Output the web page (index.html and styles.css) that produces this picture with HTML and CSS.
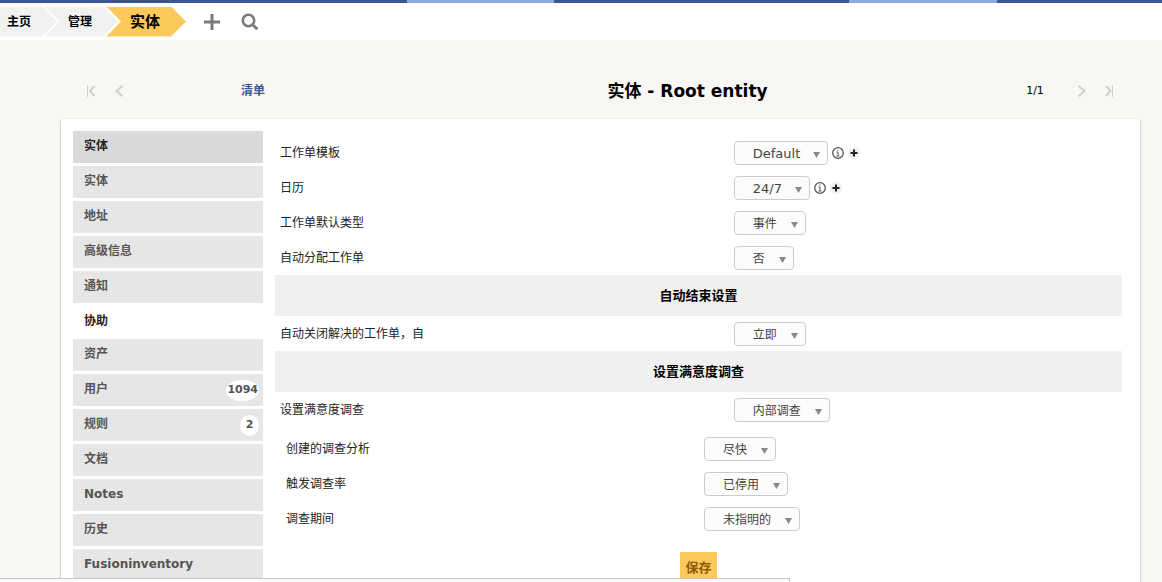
FILE: index.html
```html
<!DOCTYPE html>
<html lang="zh-CN">
<head>
    <meta charset="utf-8" />
    <title>实体 - Root entity</title>
    <link rel="stylesheet" href="styles.css">
</head>
<body>
<div class="page">
    <!-- Main menu, folded to a thin strip -->
    <div class="menu-strip">
        <span class="rest"></span>
        <span class="menu"></span>
        <span class="menu on"></span>
        <span class="menu"></span>
        <span class="menu"></span>
        <span class="menu on"></span>
        <span class="menu"></span>
    </div>

    <header class="top-bar">
        <nav class="breadcrumb">
            <a href="#" class="first">主页</a>
            <a href="#">管理</a>
            <a href="#" class="current">实体</a>
        </nav>
        <button type="button" class="tool" aria-label="添加">
            <svg width="18" height="18" viewBox="0 0 18 18"><path d="M9 1v16M1 9h16" stroke="#7b7b7b" stroke-width="3" fill="none"/></svg>
        </button>
        <button type="button" class="tool" aria-label="搜索">
            <svg width="18" height="18" viewBox="0 0 18 18"><circle cx="7.5" cy="7.5" r="5.7" stroke="#7b7b7b" stroke-width="2.6" fill="none"/><path d="M11.5 11.5l4.8 4.8" stroke="#7b7b7b" stroke-width="3"/></svg>
        </button>
    </header>

    <main>
        <!-- Record navigation -->
        <div class="pager">
            <a href="#" aria-label="第一条"><svg width="12" height="12" viewBox="0 0 12 12"><path d="M2.5 0v12"/><path class="bold" d="M9.5 .8L5 6l4.5 5.2"/></svg></a>
            <a href="#" aria-label="上一条"><svg width="12" height="12" viewBox="0 0 12 12"><path class="bold" d="M9.5 .8L3.5 6l6 5.2"/></svg></a>
            <a href="#" class="list-link">清单</a>
            <h1>实体 - Root entity</h1>
            <span class="count">1/1</span>
            <a href="#" aria-label="下一条"><svg width="12" height="12" viewBox="0 0 12 12"><path class="bold" d="M2.5 .8l6 5.2-6 5.2"/></svg></a>
            <a href="#" aria-label="最后一条"><svg width="12" height="12" viewBox="0 0 12 12"><path d="M8.5 0v12"/><path class="bold" d="M2 .8L6.5 6 2 11.2"/></svg></a>
        </div>

        <div class="card">
            <nav class="tabs">
                <a href="#" class="head">实体</a>
                <a href="#">实体</a>
                <a href="#">地址</a>
                <a href="#">高级信息</a>
                <a href="#">通知</a>
                <a href="#" class="active">协助</a>
                <a href="#">资产</a>
                <a href="#">用户<span class="badge">1094</span></a>
                <a href="#">规则<span class="badge">2</span></a>
                <a href="#">文档</a>
                <a href="#">Notes</a>
                <a href="#">历史</a>
                <a href="#">Fusioninventory</a>
            </nav>

            <form class="settings">
                <div class="row">
                    <label for="template">工作单模板</label>
                    <div class="field">
                        <select id="template" class="latin"><option>Default</option></select>
                        <button type="button" class="mini info" aria-label="说明"><svg width="12" height="12" viewBox="0 0 12 12"><circle cx="6" cy="6" r="5.3"/><path d="M4.5 5H6v4M4.5 9h3M6 2.5v1.3"/></svg></button>
                        <button type="button" class="mini plus" aria-label="添加模板"><svg width="12" height="12" viewBox="0 0 12 12"><path d="M6 2.5v7M2.5 6h7"/></svg></button>
                    </div>
                </div>
                <div class="row">
                    <label for="calendar">日历</label>
                    <div class="field">
                        <select id="calendar" class="latin"><option>24/7</option></select>
                        <button type="button" class="mini info" aria-label="说明"><svg width="12" height="12" viewBox="0 0 12 12"><circle cx="6" cy="6" r="5.3"/><path d="M4.5 5H6v4M4.5 9h3M6 2.5v1.3"/></svg></button>
                        <button type="button" class="mini plus" aria-label="添加日历"><svg width="12" height="12" viewBox="0 0 12 12"><path d="M6 2.5v7M2.5 6h7"/></svg></button>
                    </div>
                </div>
                <div class="row">
                    <label for="type">工作单默认类型</label>
                    <div class="field"><select id="type"><option>事件</option></select></div>
                </div>
                <div class="row">
                    <label for="assign">自动分配工作单</label>
                    <div class="field"><select id="assign"><option>否</option></select></div>
                </div>

                <h2>自动结束设置</h2>
                <div class="row">
                    <label for="close">自动关闭解决的工作单，自</label>
                    <div class="field"><select id="close"><option>立即</option></select></div>
                </div>

                <h2>设置满意度调查</h2>
                <div class="row">
                    <label for="survey">设置满意度调查</label>
                    <div class="field"><select id="survey"><option>内部调查</option></select></div>
                </div>
                <div class="sub">
                    <div class="row">
                        <label for="delay">创建的调查分析</label>
                        <div class="field"><select id="delay"><option>尽快</option></select></div>
                    </div>
                    <div class="row">
                        <label for="rate">触发调查率</label>
                        <div class="field"><select id="rate"><option>已停用</option></select></div>
                    </div>
                    <div class="row">
                        <label for="duration">调查期间</label>
                        <div class="field"><select id="duration"><option>未指明的</option></select></div>
                    </div>
                </div>
                <button type="submit" class="save">保存</button>
            </form>
        </div>
    </main>
</div>
<div class="link-status"></div>
</body>
</html>
```

FILE: styles.css
```css
* {
  box-sizing: border-box;
}
body {
  margin: 0;
  font-family: "DejaVu Sans", "Noto Sans CJK SC", sans-serif;
  font-size: 12px;
  line-height: 18px;
  color: #222;
  background-color: #f8f7f3;
}
a {
  color: inherit;
  text-decoration: none;
}
button {
  border: none;
  background: none;
  padding: 0;
  font-family: inherit;
  cursor: pointer;
}
svg {
  display: block;
}
.page {
  height: 100vh;
  overflow-y: auto;
  scrollbar-width: none;
}

/* ---- top ---- */
.menu-strip {
  display: flex;
  height: 3px;
  background-color: #3a5693;
}
.menu-strip .rest {
  width: 22.3%;
}
.menu-strip .menu {
  width: 12.7%;
}
.menu-strip .on {
  background-color: #8ba9dc;
}
.top-bar {
  display: flex;
  align-items: center;
  height: 37px;
  background-color: #fff;
}
.breadcrumb {
  display: flex;
  margin-right: 17px;
}
.breadcrumb a {
  height: 30px;
  line-height: 30px;
  margin-left: -12px;
  padding: 0 26px 0 23px;
  font-weight: bold;
  color: #000;
  background-color: #f1f1f1;
  clip-path: polygon(0 0, calc(100% - 15px) 0, 100% 50%, calc(100% - 15px) 100%, 0 100%, 15px 50%);
}
.breadcrumb a.first {
  margin-left: 0;
  padding-left: 7px;
  clip-path: polygon(0 0, calc(100% - 15px) 0, 100% 50%, calc(100% - 15px) 100%, 0 100%);
}
.breadcrumb a.current {
  padding-left: 24px;
  font-size: 15px;
  background-color: #fec95c;
}
.tool {
  margin-right: 20px;
}

/* ---- pager ---- */
main {
  padding: 37px 22px 0 61px;
}
.pager {
  display: grid;
  grid-template-columns: 28px 28px 240px 1fr 66px 28px 28px;
  align-items: center;
  justify-items: center;
  height: 28px;
  margin-bottom: 14px;
  padding: 0 16px;
}
.pager path {
  fill: none;
  stroke: #d0d0d0;
}
.pager path.bold {
  stroke-width: 2;
}
.pager .list-link {
  font-weight: bold;
  color: #3a5693;
}
.pager h1 {
  margin: 0;
  font-size: 17px;
  color: #000;
}
.pager .count {
  font-size: 11px;
  color: #000;
}

/* ---- card ---- */
.card {
  display: flex;
  gap: 12px;
  padding: 12px 18px 12px 12px;
  background-color: #fff;
  box-shadow: 0 1px 2px #999;
}
.tabs {
  display: flex;
  flex-direction: column;
  gap: 3px;
  width: 190px;
}
.tabs a {
  display: flex;
  justify-content: space-between;
  height: 32px;
  padding: 5px 4px 0 11px;
  line-height: 20px;
  font-weight: bold;
  color: #555;
  background-color: #e6e6e6;
}
.tabs .head {
  color: #222;
  background-color: #dadada;
}
.tabs .active {
  height: 30px;
  color: #222;
  background-color: #fff;
}
.badge {
  min-width: 19px;
  height: 21px;
  margin-top: 1px;
  padding: 0 1px;
  border-radius: 50%;
  font-size: 11px;
  text-align: center;
  background-color: #fff;
}

/* ---- form ---- */
.settings {
  flex: 1;
  display: flex;
  flex-direction: column;
  padding-top: 4px;
}
.row {
  display: grid;
  grid-template-columns: 13fr 11fr;
  height: 35px;
  padding: 6px 0 5px;
}
.row label {
  padding-left: 5px;
  line-height: 24px;
}
.field {
  display: flex;
  align-items: center;
  gap: 4px;
}
.settings h2 {
  margin: 0;
  height: 41px;
  line-height: 42px;
  font-size: 13px;
  text-align: center;
  color: #000;
  background-color: #f0f0f0;
}
.sub {
  padding: 4px 6px 0;
}
.sub .row {
  grid-template-columns: 38fr 37fr;
}
select {
  appearance: none;
  height: 24px;
  padding: 1px 27px 0 18px;
  border: 1px solid #ccc;
  border-radius: 4px;
  font-family: inherit;
  font-size: 12px;
  color: #444;
  background: #fcfcfc url("data:image/svg+xml,%3Csvg xmlns='http://www.w3.org/2000/svg' width='7' height='6'%3E%3Cpath d='M0 0h7L3.5 6z' fill='%23888'/%3E%3C/svg%3E") no-repeat right 7px top 10px;
}
select.latin {
  font-size: 13px;
  padding-right: 26px;
}
.mini.info path,
.mini.info circle {
  fill: none;
  stroke: #555;
}
.mini.info circle {
  stroke-width: 1.3;
}
.mini.plus {
  border-radius: 50%;
  background-color: #f0f0f0;
}
.mini.plus path {
  stroke: #222;
  stroke-width: 2;
}
.save {
  align-self: center;
  margin-top: 16px;
  padding: 5px;
  line-height: 22px;
  font-size: 13px;
  font-weight: bold;
  color: #8f5a0a;
  background-color: #fec95c;
}

/* ---- link preview at the window's bottom edge ---- */
.link-status {
  position: fixed;
  left: 0;
  bottom: 0;
  width: 68%;
  height: 4px;
  border: 1px solid #c6c6c6;
  border-width: 1px 1px 0 0;
  background-color: #fafafa;
}
```
